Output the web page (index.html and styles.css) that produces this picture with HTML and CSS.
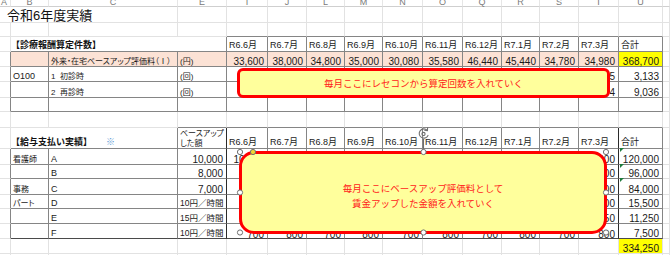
FILE: index.html
```html
<!DOCTYPE html>
<html lang="ja">
<head>
<meta charset="utf-8">
<title>令和6年度実績</title>
<link rel="stylesheet" href="styles.css">
</head>
<body>
<div class="sheet">
<table class="grid">
<colgroup>
<col class="wa"><col class="wb"><col class="wc"><col class="we"><col class="wf"><col class="wj"><col class="wl"><col class="wm"><col class="wn"><col class="wo"><col class="wq"><col class="wr"><col class="ws"><col class="wt"><col class="wu"><col class="wx">
</colgroup>
<tr class="hd h7"><td class="lft">A</td><td>B</td><td>C</td><td>E</td><td>I</td><td>J</td><td>L</td><td>M</td><td>N</td><td>O</td><td>Q</td><td>R</td><td>S</td><td>T</td><td>U</td><td></td></tr>
<tr class="h16"><td colspan="3" class="title">令和6年度実績</td><td></td><td></td><td></td><td></td><td></td><td></td><td></td><td></td><td></td><td></td><td></td><td></td><td></td></tr>
<tr class="h14"><td></td><td></td><td></td><td></td><td class="b"></td><td class="b"></td><td class="b"></td><td class="b"></td><td class="b"></td><td class="b"></td><td class="b"></td><td class="b"></td><td class="b"></td><td class="b"></td><td class="b"></td><td></td></tr>
<tr class="h15"><td></td><td colspan="3" class="sec r b">【診療報酬算定件数】</td><td class="mo r b">R6.6月</td><td class="mo r b">R6.7月</td><td class="mo r b">R6.8月</td><td class="mo r b">R6.9月</td><td class="mo r b">R6.10月</td><td class="mo r b">R6.11月</td><td class="mo r b">R6.12月</td><td class="mo r b">R7.1月</td><td class="mo r b">R7.2月</td><td class="mo r b">R7.3月</td><td class="mo r b">合計</td><td></td></tr>
<tr class="h15"><td class="r"></td><td class="pink r b"></td><td class="pink r b jp">外来・在宅ベースアップ評価料（Ⅰ）</td><td class="pink r b jp">(円)</td><td class="pink r b num">33,600</td><td class="pink r b num">38,000</td><td class="pink r b num">34,800</td><td class="pink r b num">35,000</td><td class="pink r b num">30,080</td><td class="pink r b num">35,580</td><td class="pink r b num">46,440</td><td class="pink r b num">45,440</td><td class="pink r b num">34,780</td><td class="pink r b num">34,980</td><td class="yel r b num">368,700</td><td></td></tr>
<tr class="h15"><td class="r"></td><td class="r b code">O100</td><td class="r b jp">1&nbsp;&nbsp;初診時</td><td class="r b jp">(回)</td><td class="r b num">310</td><td class="r b num">305</td><td class="r b num">300</td><td class="r b num">315</td><td class="r b num">320</td><td class="r b num">310</td><td class="r b num">330</td><td class="r b num">318</td><td class="r b num">300</td><td class="r b num">325</td><td class="r b num">3,133</td><td></td></tr>
<tr class="h16"><td class="r"></td><td class="r b"></td><td class="r b jp">2&nbsp;&nbsp;再診時</td><td class="r b jp">(回)</td><td class="r b num">900</td><td class="r b num">880</td><td class="r b num">910</td><td class="r b num">920</td><td class="r b num">890</td><td class="r b num">905</td><td class="r b num">930</td><td class="r b num">895</td><td class="r b num">902</td><td class="r b num">904</td><td class="r b num">9,036</td><td></td></tr>
<tr class="h14"><td class="r"></td><td class="r b"></td><td class="r b"></td><td class="r b"></td><td class="r b"></td><td class="r b"></td><td class="r b"></td><td class="r b"></td><td class="r b"></td><td class="r b"></td><td class="r b"></td><td class="r b"></td><td class="r b"></td><td class="r b"></td><td class="r b"></td><td></td></tr>
<tr class="h16"><td></td><td></td><td></td><td class="b"></td><td class="b"></td><td class="b"></td><td class="b"></td><td class="b"></td><td class="b"></td><td class="b"></td><td class="b"></td><td class="b"></td><td class="b"></td><td class="b"></td><td class="b"></td><td></td></tr>
<tr class="h19"><td></td><td colspan="2" class="sec r b">【給与支払い実績】<span class="note">※</span></td><td class="jp two rk b">ベースアップ<br>した額</td><td class="mo r b">R6.6月</td><td class="mo r b">R6.7月</td><td class="mo r b">R6.8月</td><td class="mo r b">R6.9月</td><td class="mo r b">R6.10月</td><td class="mo r b">R6.11月</td><td class="mo r b">R6.12月</td><td class="mo r b">R7.1月</td><td class="mo r b">R7.2月</td><td class="mo rk b">R7.3月</td><td class="mo r b">合計</td><td></td></tr>
<tr class="h16"><td class="r"></td><td class="r b jp">看護師</td><td class="r b code">A</td><td class="rk b num">10,000</td><td class="r b num">10,000</td><td class="r b num">10,000</td><td class="r b num">10,000</td><td class="r b num">10,000</td><td class="r b num">10,000</td><td class="r b num">10,000</td><td class="r b num">10,000</td><td class="r b num">10,000</td><td class="r b num">10,000</td><td class="rk b num">10,000</td><td class="r b num">120,000</td><td></td></tr>
<tr class="h14"><td class="r"></td><td class="r b"></td><td class="r b code">B</td><td class="rk b num">8,000</td><td class="r b num">8,000</td><td class="r b num">8,000</td><td class="r b num">8,000</td><td class="r b num">8,000</td><td class="r b num">8,000</td><td class="r b num">8,000</td><td class="r b num">8,000</td><td class="r b num">8,000</td><td class="r b num">8,000</td><td class="rk b num">8,000</td><td class="r b num">96,000</td><td></td></tr>
<tr class="h16"><td class="r"></td><td class="r b jp">事務</td><td class="r b code">C</td><td class="rk b num">7,000</td><td class="r b num">7,000</td><td class="r b num">7,000</td><td class="r b num">7,000</td><td class="r b num">7,000</td><td class="r b num">7,000</td><td class="r b num">7,000</td><td class="r b num">7,000</td><td class="r b num">7,000</td><td class="r b num">7,000</td><td class="rk b num">7,000</td><td class="r b num">84,000</td><td></td></tr>
<tr class="h14"><td class="r"></td><td class="r b jp">パート</td><td class="r b code">D</td><td class="rk b hr">10円／時間</td><td class="r b num">1,600</td><td class="r b num">1,500</td><td class="r b num">1,400</td><td class="r b num">1,500</td><td class="r b num">1,600</td><td class="r b num">1,700</td><td class="r b num">1,500</td><td class="r b num">1,600</td><td class="r b num">1,500</td><td class="rk b num">1,600</td><td class="r b num">15,500</td><td></td></tr>
<tr class="h15"><td class="r"></td><td class="r b"></td><td class="r b code">E</td><td class="rk b hr">15円／時間</td><td class="r b num">1,125</td><td class="r b num">1,200</td><td class="r b num">1,125</td><td class="r b num">1,050</td><td class="r b num">1,200</td><td class="r b num">1,125</td><td class="r b num">1,125</td><td class="r b num">1,200</td><td class="r b num">1,050</td><td class="rk b num">1,050</td><td class="r b num">11,250</td><td></td></tr>
<tr class="h15"><td class="r"></td><td class="r bk"></td><td class="r bk code">F</td><td class="rk bk hr">10円／時間</td><td class="r bk num lowrow">700</td><td class="r bk num lowrow">800</td><td class="r bk num lowrow">700</td><td class="r bk num lowrow">800</td><td class="r bk num lowrow">700</td><td class="r bk num lowrow">800</td><td class="r bk num lowrow">700</td><td class="r bk num lowrow">800</td><td class="r bk num lowrow">700</td><td class="rk bk num lowrow">800</td><td class="r bk num">7,500</td><td></td></tr>
<tr class="h15"><td></td><td></td><td></td><td></td><td></td><td></td><td></td><td></td><td></td><td></td><td></td><td></td><td></td><td></td><td class="yel num">334,250</td><td></td></tr>
<tr class="h15"><td></td><td></td><td></td><td></td><td></td><td></td><td></td><td></td><td></td><td></td><td></td><td></td><td></td><td></td><td></td><td></td></tr>
</table>

<div class="callout c1">毎月ここにレセコンから算定回数を入れていく</div>
<div class="callout c2">毎月ここにベースアップ評価料として<br>賃金アップした金額を入れていく</div>

<svg class="overlay" width="670" height="255" viewBox="0 0 670 255">
  <g fill="#1e7b3c">
    <polygon points="620,148 624,148 620,152"/>
    <polygon points="620,164 624,164 620,168"/>
    <polygon points="620,178 624,178 620,182"/>
  </g>
  <g fill="none" stroke="#6f6f6f" stroke-width="1.1" stroke-linecap="round" stroke-linejoin="round">
    <path d="M427.2 130.4 A4.6 4.6 0 1 0 428 135.4"/>
    <path d="M427.6 127.8 L427.4 130.6 L424.7 130.3"/>
    <circle cx="423.5" cy="134" r="1.6"/>
    <line x1="423.5" y1="139.2" x2="423.5" y2="149.3"/>
  </g>
  <g fill="#ffffff" stroke="#6f6f6f" stroke-width="1">
    <circle cx="240" cy="152" r="2.6"/>
    <circle cx="423.5" cy="152" r="2.6"/>
    <circle cx="606" cy="152" r="2.6"/>
    <circle cx="240" cy="192.5" r="2.6"/>
    <circle cx="606" cy="192.5" r="2.6"/>
    <circle cx="240" cy="232.5" r="2.6"/>
    <circle cx="423.5" cy="232.5" r="2.6"/>
    <circle cx="606" cy="232.5" r="2.6"/>
  </g>
  <circle cx="253" cy="152" r="2.6" fill="#f2d530" stroke="#6f6f6f" stroke-width="1"/>
</svg>
</div>
</body>
</html>
```
FILE: styles.css
```css
html, body {
  margin: 0;
  padding: 0;
  background: #ffffff;
}

.sheet {
  position: relative;
  width: 670px;
  height: 255px;
  overflow: hidden;
  font-family: "Liberation Sans", "Noto Sans CJK JP", sans-serif;
  color: #1a1a1a;
}

.grid {
  border-collapse: separate;
  border-spacing: 0;
  table-layout: fixed;
  width: 670px;
}

.wa { width: 11px; }
.wb { width: 38px; }
.wc { width: 129px; }
.we { width: 49px; }
.wf { width: 41px; }
.wj { width: 39px; }
.wl { width: 38px; }
.wm { width: 38px; }
.wn { width: 40px; }
.wo { width: 40px; }
.wq { width: 39px; }
.wr { width: 38px; }
.ws { width: 39px; }
.wt { width: 40px; }
.wu { width: 44px; }
.wx { width: 7px; }

.grid td {
  box-sizing: border-box;
  border-right: 1px solid #e2e2e2;
  border-bottom: 1px solid #e2e2e2;
  padding: 0 2px;
  font-size: 10px;
  line-height: 9px;
  vertical-align: bottom;
  white-space: nowrap;
  overflow: visible;
}

.h7 { height: 7px; }
.h14 { height: 14px; }
.h15 { height: 15px; }
.h16 { height: 16px; }
.h19 { height: 19px; }

.hd td {
  font-size: 9px;
  line-height: 4px;
  padding-bottom: 2px;
  color: #7a7a7a;
  text-align: center;
  border-bottom-color: #cfcfcf;
  border-right-color: #e6e6e6;
}
.hd td.lft { text-align: left; padding-left: 1px; }

.grid td.r { border-right-color: #858585; }
.grid td.b { border-bottom-color: #858585; }
.grid td.rk { border-right-color: #2b2b2b; }
.grid td.bk { border-bottom-color: #4a4a4a; }

.grid td.title {
  font-size: 13px;
  line-height: 13px;
  padding-left: 7px;
  color: #111;
}

.grid td.sec {
  font-size: 9px;
  font-weight: 700;
  padding-left: 0;
  line-height: 9px;
  padding-bottom: 1px;
  color: #111;
}
.note {
  color: #5b9bd5;
  font-weight: 400;
  margin-left: 14px;
}

.grid td.mo {
  font-size: 9px;
  line-height: 9px;
  padding-bottom: 1px;
}

.grid td.jp {
  font-size: 8px;
  font-feature-settings: "palt";
  line-height: 9px;
}

.grid td.two {
  line-height: 9.5px;
  vertical-align: top;
  padding-top: 1px;
}

.grid td.code {
  font-size: 9px;
}

.grid td.hr {
  font-size: 8.5px;
}

.grid td.num {
  text-align: right;
  padding-right: 3px;
}

.grid td.lowrow {
  line-height: 7px;
}

.pink { background: #fce2d5; }
.yel { background: #ffff00; }

.callout {
  position: absolute;
  box-sizing: border-box;
  border: 3px solid #ff0000;
  background: #ffff9c;
  color: #ff1a1a;
  font-family: "Noto Sans CJK JP", sans-serif;
  font-size: 9.5px;
  text-align: center;
  display: flex;
  align-items: center;
  justify-content: center;
}

.c1 {
  left: 237px;
  top: 68px;
  width: 373px;
  height: 30px;
  border-radius: 6px;
  line-height: 12px;
}

.c2 {
  left: 239px;
  top: 151px;
  width: 368px;
  height: 83px;
  border-radius: 15px;
  line-height: 15px;
  padding-top: 7px;
}

.overlay {
  position: absolute;
  left: 0;
  top: 0;
  pointer-events: none;
}
```
